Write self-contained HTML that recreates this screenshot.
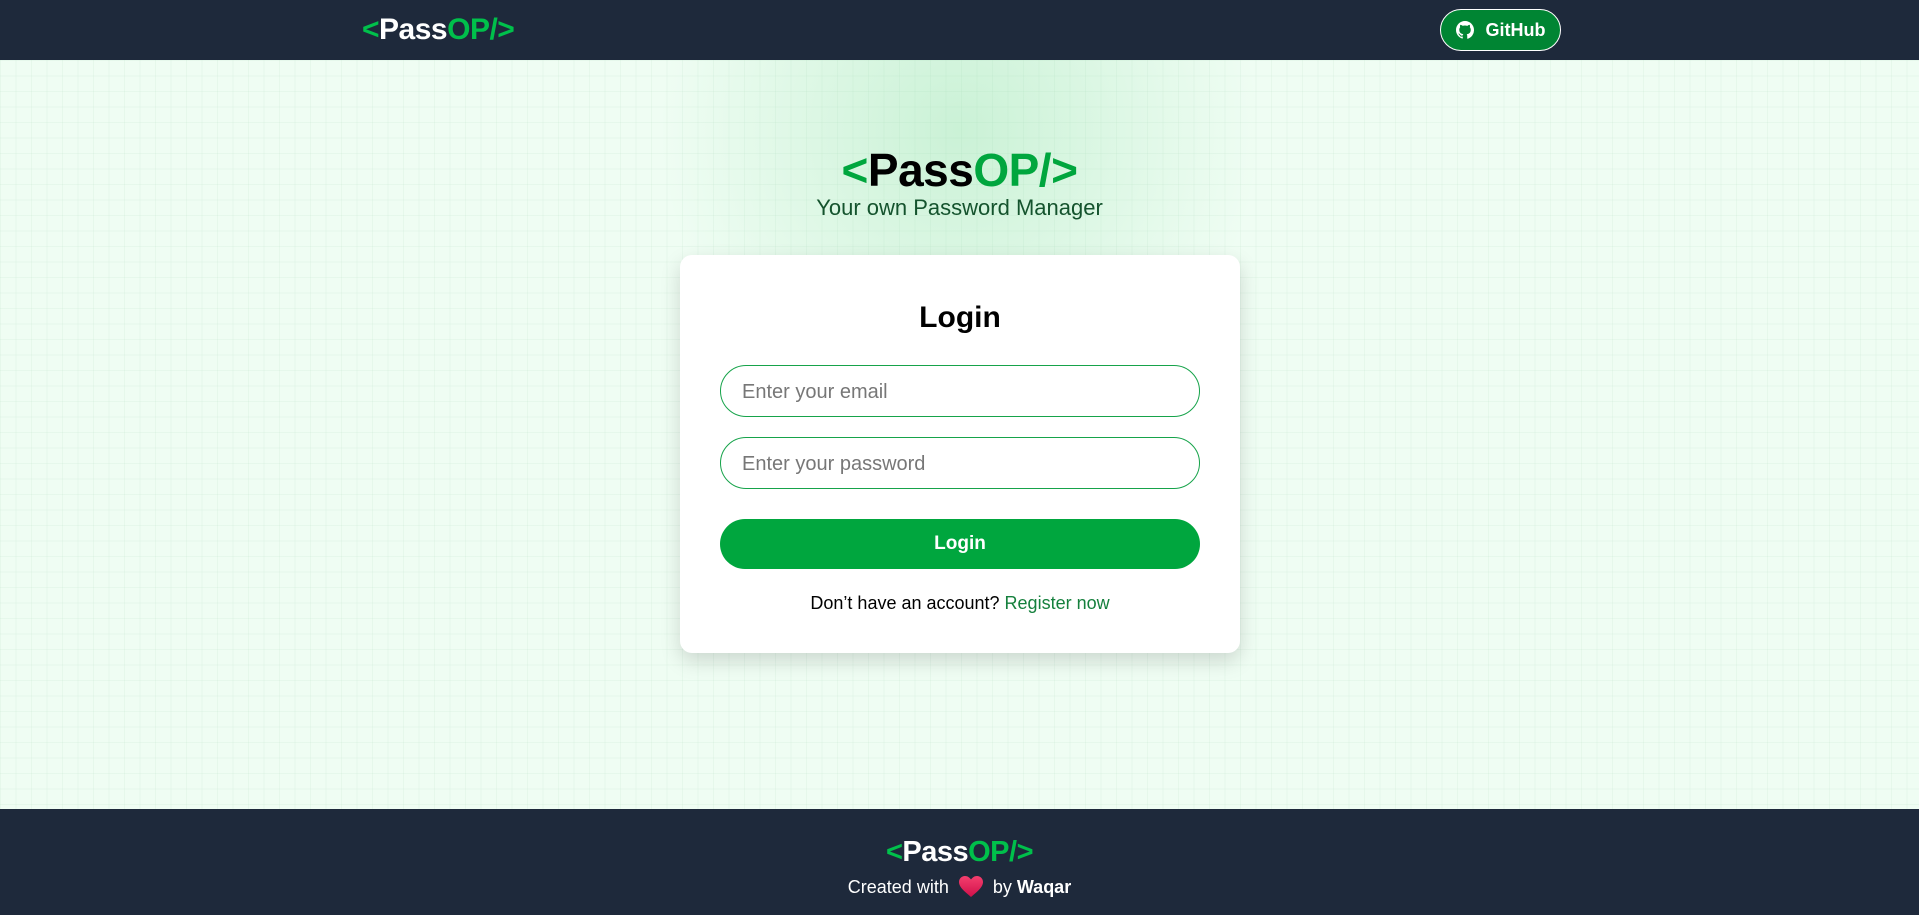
<!DOCTYPE html>
<html><head><meta charset="utf-8"><style>
*{margin:0;padding:0;box-sizing:border-box}
body{width:1919px;height:915px;overflow:hidden;font-family:"Liberation Sans",sans-serif;background:#f0fdf4;position:relative}
.bg{position:absolute;left:0;top:60px;width:1919px;height:749px;background:
radial-gradient(circle 300px at 960px 70px,rgba(134,220,160,.35),rgba(134,220,160,0) 100%),
linear-gradient(to right,rgba(180,220,190,.15) 1px,transparent 1px),
linear-gradient(to bottom,rgba(180,220,190,.15) 1px,transparent 1px),#effdf3;
background-size:auto,15.5px 15.5px,15.5px 15.5px,auto}
nav{position:absolute;top:0;left:0;width:1919px;height:60px;background:#1e293b}
.logo{font-weight:bold;letter-spacing:-0.5px}
.logo .g{color:#00c04b}.logo .w{color:#fff}
nav .logo{position:absolute;left:362px;top:13px;font-size:30px}
.gh{position:absolute;left:1440px;top:9px;width:121px;height:42px;border:1.5px solid #fff;border-radius:21px;background:#008533;color:#fff;font-weight:bold;font-size:18px;display:flex;align-items:center;justify-content:center;gap:12px}
.hero{position:absolute;left:0;width:1919px;text-align:center}
.t1{top:143px;font-size:46px;font-weight:bold;color:#000}
.t1 .g{color:#00a63e}
.t2{top:195px;font-size:22px;color:#14532d}
.card{position:absolute;left:680px;top:255px;width:560px;height:398px;background:#fff;border-radius:12px;box-shadow:0 8px 20px rgba(0,0,0,.15)}
.card h2{position:absolute;top:46px;width:100%;text-align:center;font-size:30px}
.in{position:absolute;left:40px;width:480px;height:52px;border:1.3px solid #16a34a;border-radius:26px;color:#777;font-size:20px;padding-left:21px;line-height:52px}
.btn{position:absolute;left:40px;top:264px;width:480px;height:50px;border-radius:25px;background:#00a63e;color:#fff;font-weight:bold;font-size:19px;text-align:center;line-height:50px}
.reg{position:absolute;top:338px;width:100%;text-align:center;font-size:18px;color:#000}
.reg span{color:#15803d}
footer{position:absolute;top:809px;left:0;width:1919px;height:106px;background:#1e293b;text-align:center}
footer .logo{position:absolute;top:27px;width:100%;font-size:29px}
.cr{position:absolute;top:67px;width:100%;color:#fff;font-size:18px}
.cr svg{vertical-align:-4px;margin:0 10px}
</style></head><body>
<div class="bg"></div>
<nav><div class="logo"><span class="g">&lt;</span><span class="w">Pass</span><span class="g">OP/&gt;</span></div>
<div class="gh"><svg width="18" height="18" viewBox="0 0 16 16" fill="#fff"><path d="M8 0C3.58 0 0 3.58 0 8c0 3.54 2.290 6.530 5.470 7.590.4.07.55-.17.55-.38v-1.4C3.8 14.3 3.3 12.9 3.3 12.9c-.36-.92-.89-1.17-.89-1.17-.73-.5.05-.49.05-.49.8.06 1.23.83 1.23.83.72 1.230 1.880.870 2.340.670.07-.52.28-.87.51-1.07-1.78-.2-3.64-.89-3.64-3.95 0-.87.31-1.59.82-2.150-.08-.2-.36-1.02.08-2.12 0 0 .67-.21 2.2.82A7.6 7.6 0 0 1 8 4.04c.68 0 1.36.09 2 .27 1.53-1.04 2.2-.82 2.2-.82.44 1.1.16 1.92.08 2.12.51.56.82 1.27.82 2.15 0 3.07-1.87 3.75-3.65 3.95.29.25.54.73.54 1.48v2.2c0 .21.15.46.55.38A8 8 0 0 0 16 8c0-4.42-3.58-8-8-8z"/></svg>GitHub</div></nav>
<div class="hero t1 logo"><span class="g">&lt;</span>Pass<span class="g">OP/&gt;</span></div>
<div class="hero t2">Your own Password Manager</div>
<div class="card"><h2>Login</h2>
<div class="in" style="top:110px">Enter your email</div>
<div class="in" style="top:182px">Enter your password</div>
<div class="btn">Login</div>
<div class="reg">Don’t have an account? <span>Register now</span></div></div>
<footer><div class="logo"><span class="g">&lt;</span><span class="w">Pass</span><span class="g">OP/&gt;</span></div>
<div class="cr">Created with<svg width="24" height="21" viewBox="0 0 24 21"><defs><linearGradient id="h" x1="0" y1="0" x2="0" y2="1"><stop offset="0" stop-color="#f43f6e"/><stop offset="1" stop-color="#d0104a"/></linearGradient></defs><path d="M12 21C5 15 0 11 0 6 0 2.5 2.7 0 6 0c2.5 0 4.5 1.400 6 3.5C13.5 1.4 15.5 0 18 0c3.3 0 6 2.5 6 6 0 5-5 9-12 15z" fill="url(#h)"/></svg>by <b>Waqar</b></div></footer>
</body></html>
